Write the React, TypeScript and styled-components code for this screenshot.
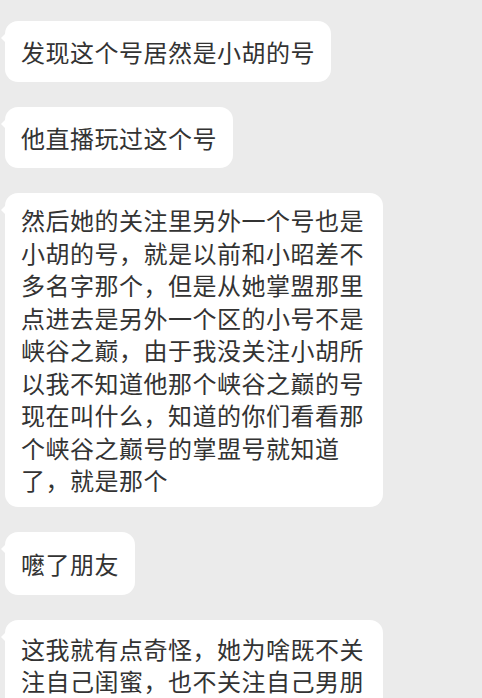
import React from 'react';
import styled, { createGlobalStyle } from 'styled-components';

const GlobalStyle = createGlobalStyle`
	html, body {
		margin: 0;
		padding: 0;
		height: 698px;
		overflow: hidden;
		background: #ebebeb;
	}
`;

const ChatList = styled.div`
	display: flex;
	flex-direction: column;
	align-items: flex-start;
	gap: 25px;
	padding: 21px 0 0 5px;
	font-family: 'Noto Sans CJK SC', 'Noto Sans', sans-serif;
`;

const Bubble = styled.div<{ $padTop?: number; $padBottom?: number }>`
	position: relative;
	box-sizing: border-box;
	max-width: 378px;
	padding: ${(p) => p.$padTop ?? 15}px 16px ${(p) => p.$padBottom ?? 13.5}px 16px;
	background: #ffffff;
	border-radius: 13px;
	color: #333333;
	font-size: 24px;
	letter-spacing: 0.5px;
	line-height: 32.5px;

	&::before {
		content: '';
		position: absolute;
		left: -4px;
		top: 12px;
		border-top: 5px solid transparent;
		border-bottom: 5px solid transparent;
		border-right: 5px solid #ffffff;
	}
`;

const messages = [
	{ text: '发现这个号居然是小胡的号' },
	{ text: '他直播玩过这个号' },
	{
		text: '然后她的关注里另外一个号也是小胡的号，就是以前和小昭差不多名字那个，但是从她掌盟那里点进去是另外一个区的小号不是峡谷之巅，由于我没关注小胡所以我不知道他那个峡谷之巅的号现在叫什么，知道的你们看看那个峡谷之巅号的掌盟号就知道了，就是那个',
		padTop: 11,
		padBottom: 10.5,
	},
	{ text: '嚒了朋友', padTop: 16, padBottom: 14 },
	{ text: '这我就有点奇怪，她为啥既不关注自己闺蜜，也不关注自己男朋', padTop: 13, padBottom: 40 },
];

const App = () => {
	return (
		<>
			<GlobalStyle />
			<ChatList>
				{messages.map((m, i) => (
					<Bubble key={i} $padTop={m.padTop} $padBottom={m.padBottom}>
						{m.text}
					</Bubble>
				))}
			</ChatList>
		</>
	);
};

export default App;
